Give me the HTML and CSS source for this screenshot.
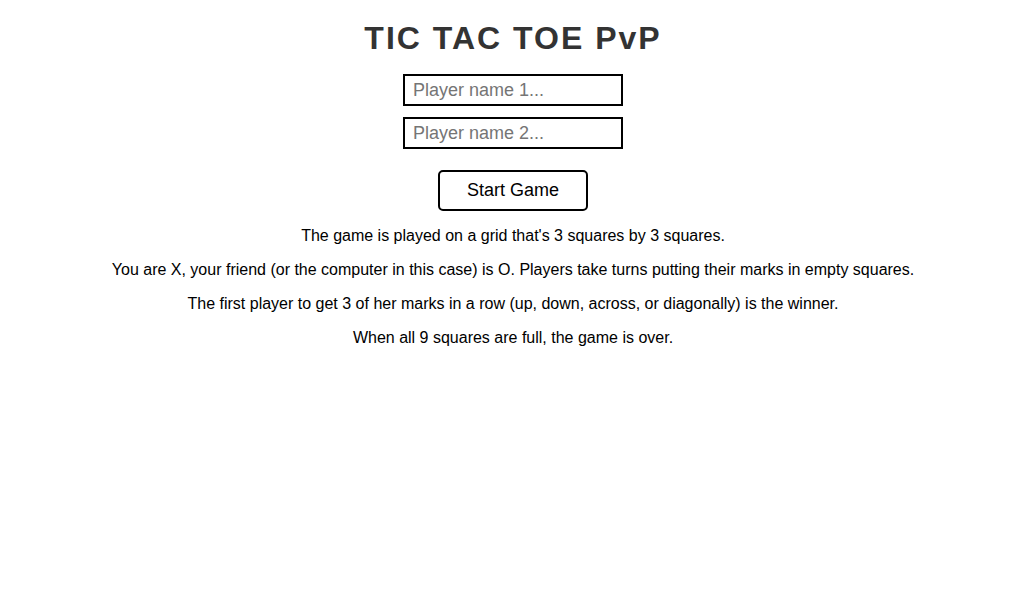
FILE: index.html
```html
<!DOCTYPE html>
<html>
<head>
<meta charset="utf-8">
<link rel="stylesheet" href="styles.css">
</head>
<body>
<main class="page">
  <h1 class="title">TIC TAC TOE PvP</h1>
  <div class="form">
    <input class="name-input" type="text" placeholder="Player name 1...">
    <input class="name-input" type="text" placeholder="Player name 2...">
    <button class="start-btn">Start Game</button>
  </div>
  <div class="rules">
    <p>The game is played on a grid that's 3 squares by 3 squares.</p>
    <p>You are X, your friend (or the computer in this case) is O. Players take turns putting their marks in empty squares.</p>
    <p>The first player to get 3 of her marks in a row (up, down, across, or diagonally) is the winner.</p>
    <p>When all 9 squares are full, the game is over.</p>
  </div>
</main>
</body>
</html>
```

FILE: styles.css
```css
html, body {
  margin: 0;
  padding: 0;
  background: #fff;
}
body {
  font-family: "Liberation Sans", Arial, sans-serif;
  color: #000;
}
.page {
  display: flex;
  flex-direction: column;
  align-items: center;
  padding-top: 18px;
  padding-left: 17px;
}
.title {
  margin: 0 0 16px;
  font-size: 32px;
  font-weight: bold;
  letter-spacing: 2px;
  color: #333;
  line-height: 40px;
}
.form {
  display: flex;
  flex-direction: column;
  align-items: center;
  gap: 11px;
}
.name-input {
  box-sizing: border-box;
  width: 220px;
  height: 32px;
  border: 2px solid #000;
  padding: 0 8px;
  font-family: "Liberation Sans", Arial, sans-serif;
  font-size: 18px;
  outline: none;
  margin: 0;
}
.name-input::placeholder {
  color: #757575;
}
.start-btn {
  box-sizing: border-box;
  margin-top: 10px;
  width: 150px;
  height: 41px;
  border: 2px solid #000;
  border-radius: 5px;
  background: #fff;
  font-family: "Liberation Sans", Arial, sans-serif;
  font-size: 18px;
  color: #000;
}
.rules {
  margin-top: 16px;
  text-align: center;
  font-size: 16px;
}
.rules p {
  margin: 0 0 16px;
  line-height: 18px;
}
```
